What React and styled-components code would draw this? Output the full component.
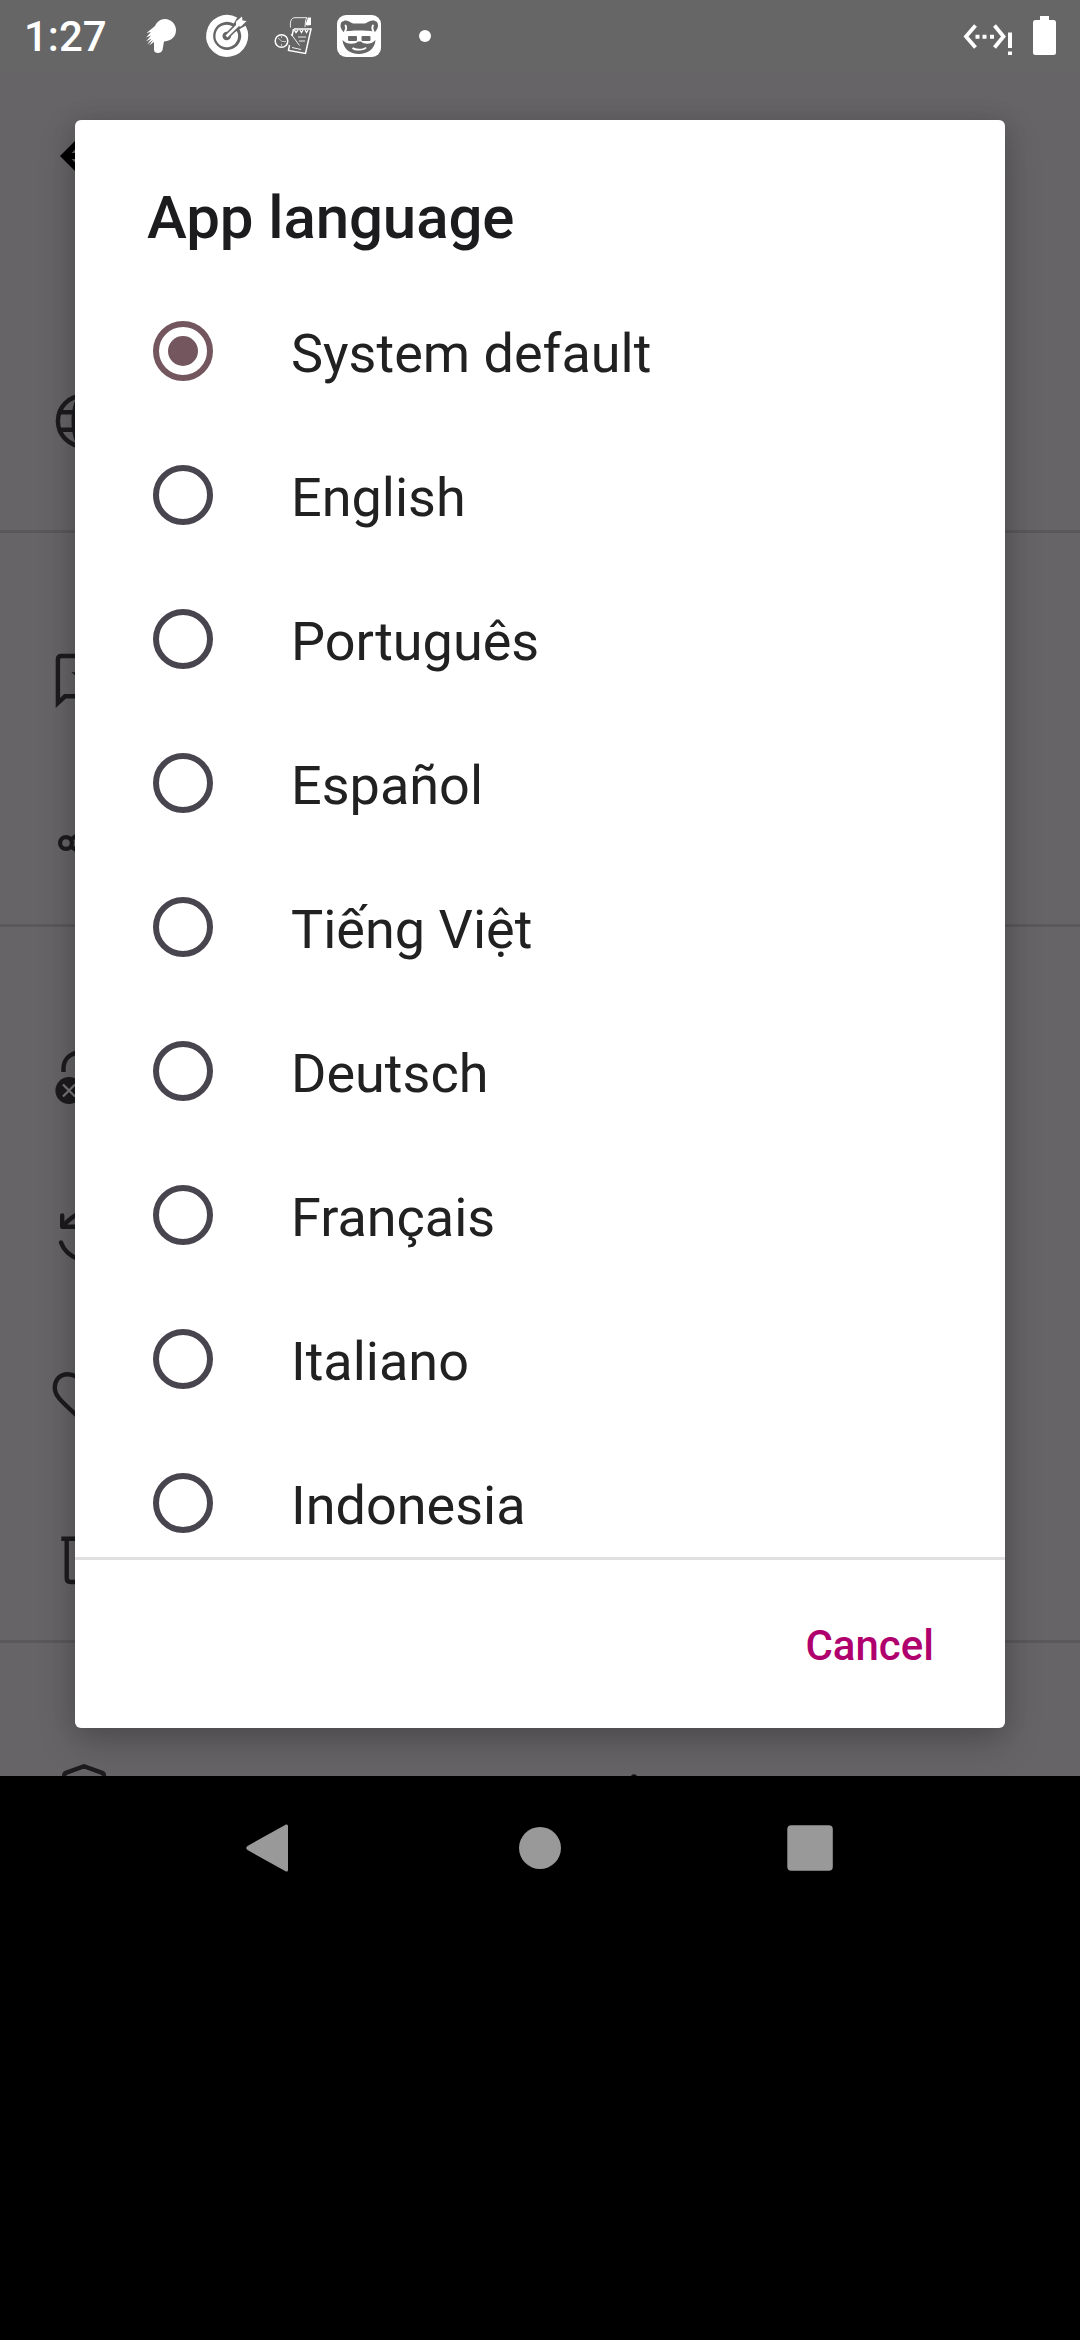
import React, { useState } from "react";
import styled, { createGlobalStyle } from "styled-components";

const GlobalStyle = createGlobalStyle`
  body { margin: 0; background: #000; }
  * { box-sizing: border-box; }
`;

const Screen = styled.div`
  position: relative;
  display: flex;
  flex-direction: column;
  width: 1080px;
  height: 2340px;
  overflow: hidden;
  background: #000;
  font-family: Roboto, "Noto Sans", sans-serif;
`;

const StatusBar = styled.header`
  display: flex;
  align-items: center;
  height: 72px;
  padding-left: 24px;
  background: #666666;
  color: #fff;
`;

const Clock = styled.time`
  width: 104px;
  padding-top: 2px;
  font-size: 42px;
  font-weight: 500;
  line-height: 50px;
  white-space: nowrap;
`;

const StatusIcons = styled.div`
  display: flex;
  margin-left: ${(p) => (p.$end ? "auto" : "0")};
`;

const Glyph = styled.svg`
  display: block;
  flex: none;
  width: ${(p) => p.$w}px;
  height: ${(p) => p.$h}px;
`;

const Page = styled.main`
  display: flex;
  flex-direction: column;
  height: 1704px;
  overflow: hidden;
  background: #676468;
  color: #1d1b1e;
`;

const AppBar = styled.div`
  height: 168px;
  color: #000;
`;

const Section = styled.section`
  display: flex;
  flex: none;
  flex-direction: column;
  justify-content: flex-end;
  height: ${(p) => p.$h}px;
  padding-bottom: ${(p) => p.$pad || 0}px;
  border-bottom: ${(p) => (p.$last ? "none" : "3px solid #5b585c")};
`;

const SettingRow = styled.div`
  display: flex;
  height: ${(p) => p.$h || 162}px;
`;

const Dialog = styled.div`
  position: absolute;
  top: 120px;
  left: 75px;
  display: flex;
  flex-direction: column;
  width: 930px;
  height: 1608px;
  overflow: hidden;
  border-radius: 6px;
  background: #fff;
`;

/* Clips the dialog shadow so that it stays above the navigation bar. */
const ShadowLayer = styled.div`
  position: absolute;
  inset: 0 0 564px 0;
  overflow: hidden;
  &::before {
    content: "";
    position: absolute;
    top: 120px;
    left: 75px;
    width: 930px;
    height: 1608px;
    border-radius: 6px;
    box-shadow: 0 14px 36px rgba(0, 0, 0, 0.22), 0 0 24px rgba(0, 0, 0, 0.1);
  }
`;

const Title = styled.h1`
  flex: none;
  height: 159px;
  margin: 0;
  padding: 62px 72px 0;
  color: #1c1b1e;
  font-size: 60px;
  font-weight: 500;
  line-height: 72px;
  letter-spacing: -0.1px;
`;

const Options = styled.div`
  flex: 1;
  min-height: 0;
  overflow: hidden;
`;

const Option = styled.label`
  display: flex;
  align-items: center;
  gap: 75px;
  height: 144px;
  padding-left: 78px;
`;

const Radio = styled.span`
  display: flex;
  flex: none;
  align-items: center;
  justify-content: center;
  width: 60px;
  height: 60px;
  border: 6px solid ${(p) => (p.$on ? "#74565f" : "#49454e")};
  border-radius: 50%;
  &::after {
    content: "";
    width: 30px;
    height: 30px;
    border-radius: 50%;
    background: ${(p) => (p.$on ? "#74565f" : "transparent")};
  }
`;

const OptionText = styled.span`
  padding: 5px 0 0 3px;
  color: #212121;
  font-size: 54px;
  line-height: 64px;
  white-space: nowrap;
`;

const Actions = styled.footer`
  display: flex;
  flex: none;
  align-items: center;
  justify-content: flex-end;
  height: 171px;
  padding-right: 35px;
  border-top: 3px solid #e0e0e0;
`;

const TextButton = styled.button`
  padding: 4px 36px 0;
  border: 0;
  background: none;
  color: #b0006d;
  font-family: inherit;
  font-size: 42px;
  font-weight: 500;
  line-height: 50px;
`;

const NavBar = styled.nav`
  display: flex;
  justify-content: center;
  height: 144px;
  gap: 198px;
  color: #999;
`;

const Icon = ({ x = 0, y, w = 110, h = 162, children }) => (
  <Glyph $w={w} $h={h} viewBox={`${x} ${y} ${w} ${h}`} fill="none" stroke="currentColor" strokeWidth="4.4">
    {children}
  </Glyph>
);

const languages = [
  "System default",
  "English",
  "Português",
  "Español",
  "Tiếng Việt",
  "Deutsch",
  "Français",
  "Italiano",
  "Indonesia",
];

function StatusGlyphs() {
  return (
    <StatusIcons>
      <Icon x={128} y={0} w={66} h={72}>
        <path
          d="M165 19C171 19 176 24 176 30C176 36 172 41 164 41.500L162.500 50C161.500 54 154 54 154 50V42L149 45.500L153 40L147 44.500L151.500 38.500L146 41.500L151 35.500L146 37.500L151 32L146.500 33L155 26C157 22 160 19 165 19Z"
          fill="currentColor" stroke="none"
        />
      </Icon>
      <Icon x={194} y={0} w={66} h={72}>
        <path d="M235.500 20.500A17.500 17.500 0 1 0 242.500 27.500" strokeWidth="7" />
        <path d="M231 29.500A7.800 7.800 0 1 0 233.700 32.500" strokeWidth="7" />
        <path d="M226.500 36.500L238 25" stroke="#666" strokeWidth="6" />
        <path d="M226.500 36.500L240 23" strokeWidth="2.600" />
        <path d="M236 26V21.500L242 16.500L242.500 20.500L246.500 21L241 26.500Z" fill="currentColor" stroke="none" />
      </Icon>
      <Icon x={260} y={0} w={66} h={72}>
        <g strokeWidth="0.900">
          <circle cx="281.500" cy="41" r="6.300" strokeWidth="1.500" />
          <path d="M278 38L282 41.500H286M281.500 36V38M281.500 44V46" strokeWidth="0.600" />
          <path d="M290.500 27.500C290 21 291 18 295 17.700H307C305 20 305.500 24 305 27" />
          <path d="M294 29L311 29L305.500 53.500L288.500 50.500L289.500 45M292 36L293.500 29" strokeWidth="1.500" />
          <path d="M294.500 30L296 32.500L298 30M300 30L301.500 32.500L303 30M305 30L306.500 32.500L308 30" strokeWidth="1.300" />
          <path d="M298 37H306M299 41H305M292 47.500L301 49.500M291 34L299.500 45.500" />
          <path d="M308 17.500H311V25L307 25.500L305.500 24.500Z" fill="currentColor" stroke="none" />
        </g>
      </Icon>
      <Icon x={326} y={0} w={66} h={72}>
        <rect x="337" y="15" width="44" height="42" rx="9" fill="currentColor" stroke="none" />
        <g fill="#666" stroke="none">
          <path d="M341.500 22C344 20.500 346 20 348 21L353 23.500H365L370 21C373 20 375 20.500 377 22C379 25 378 29 375 32C369 30 349 30 343.500 32C340 28 340 25 341.500 22Z" />
          <path d="M342.500 40C347 45 355 44.500 358 41.500H361C364 44.500 371 45 375.500 40C375 49 367 54 359 54C350 54 343.500 49 342.500 40Z" />
          <rect x="348" y="36" width="9" height="5" rx="1" />
          <rect x="361.500" y="36" width="9" height="5" rx="1" />
        </g>
        <path d="M345 25C347.500 27 346 30 344.500 33M373.500 25C371 27 372.500 30 374 33" strokeWidth="2" />
        <path d="M352.500 48C355 50.300 364 50.300 366 47.500" strokeWidth="1.700" />
      </Icon>
      <Icon x={392} y={0} w={66} h={72}>
        <circle cx="425" cy="36" r="6" fill="currentColor" stroke="none" />
      </Icon>
    </StatusIcons>
  );
}

function SystemGlyphs() {
  return (
    <StatusIcons $end>
      <Icon x={956} y={0} w={64} h={72}>
        <path d="M975.500 25.500L966 36.500L975.500 47.500M994.500 25.500L1003.500 36.500L994.500 47.500" strokeWidth="3.800" />
        <path d="M975.500 36.700H979.500M982.500 36.700H986.500M990 36.700H994" strokeWidth="4" />
        <path d="M1010 32.500V48M1010 51.500V55" strokeWidth="4" />
      </Icon>
      <Icon x={1020} y={0} w={60} h={72}>
        <path d="M1040 16H1049V20H1053.500Q1056 20 1056 22.500V52.500Q1056 55 1053.500 55H1035.500Q1033 55 1033 52.500V22.500Q1033 20 1035.500 20H1040Z" fill="currentColor" stroke="none" />
      </Icon>
    </StatusIcons>
  );
}

export default function App() {
  const [selected, setSelected] = useState(0);
  return (
    <>
      <GlobalStyle />
      <Screen>
        <StatusBar>
          <Clock>1:27</Clock>
          <StatusGlyphs />
          <SystemGlyphs />
        </StatusBar>

        <Page>
          <AppBar>
            <Icon y={72} h={168}>
              <path transform="translate(48 120) scale(3)" d="M20 11H7.830l5.590-5.590L12 4l-8 8 8 8 1.410-1.410L7.830 13H20v-2z" fill="currentColor" stroke="none" />
            </Icon>
          </AppBar>

          <Section $h={293} $pad={28}>
            <SettingRow>
              <Icon y={340}>
                <circle cx="83.200" cy="421" r="25.300" />
                <ellipse cx="83.200" cy="421" rx="9.500" ry="25.300" />
                <path d="M60 412.200H106M60 429.800H106" />
              </Icon>
            </SettingRow>
          </Section>

          <Section $h={394}>
            <SettingRow>
              <Icon y={600}>
                <path d="M57.900 703V659.500Q57.900 656 61.500 656H105Q108.500 656 108.500 659.500V692.800Q108.500 696.300 105 696.300H65Z" />
                <path d="M71.300 672.300H80.500L83.200 664L86 672.300H95L87.800 678L90.500 687L83.200 681.500L75.800 687L78.500 678Z" fill="currentColor" stroke="none" />
              </Icon>
            </SettingRow>
            <SettingRow>
              <Icon y={762}>
                <circle cx="66" cy="843" r="5.900" strokeWidth="4.200" />
                <path d="M70 840L98 822M70 846L98 864" />
              </Icon>
            </SettingRow>
          </Section>

          <Section $h={716}>
            <SettingRow>
              <Icon y={992}>
                <path d="M63.500 1072V1068.500C63.500 1060 69 1054 78 1052.500" />
                <circle cx="69" cy="1090.500" r="13.600" fill="currentColor" stroke="none" />
                <path d="M63 1084.500L75 1096.500M75 1084.500L63 1096.500" stroke="#7a777b" strokeWidth="2.200" />
              </Icon>
            </SettingRow>
            <SettingRow>
              <Icon y={1154}>
                <g strokeLinecap="round" strokeLinejoin="round">
                  <path d="M62.200 1215.500V1226.700H78" />
                  <path d="M63.500 1225.500C67.500 1221 72 1217 78 1214" />
                  <path d="M61 1242.500C63.500 1249.500 68 1255 78 1259" />
                </g>
              </Icon>
            </SettingRow>
            <SettingRow>
              <Icon y={1316}>
                <path d="M84 1384C79 1377 73.500 1374.200 67.500 1374.200C60 1374.200 54.800 1380 54.800 1388C54.800 1396.500 62 1402 84 1422" />
              </Icon>
            </SettingRow>
            <SettingRow>
              <Icon y={1478}>
                <path d="M61.300 1538.700H107M66.700 1538V1578Q66.700 1582 70.700 1582H96" />
              </Icon>
            </SettingRow>
          </Section>

          <Section $h={133} $last>
            <SettingRow $h={66}>
              <Icon y={1710} h={66} w={640}>
                <path d="M64.200 1790V1775.500Q64.200 1773.500 66.500 1772.600L84 1766.300L101.500 1772.600Q104 1773.500 104 1775.500V1790" strokeLinejoin="round" />
                <path d="M631 1776Q631.500 1774.300 634 1774.300Q636.500 1774.300 637 1776Z" fill="#111" stroke="none" />
              </Icon>
            </SettingRow>
          </Section>
        </Page>

        <NavBar>
          <Icon x={234} y={1776} w={72} h={144}>
            <path d="M286 1824.500Q288 1824 288 1826V1870Q288 1872 286 1871.500L247.500 1850Q245 1848 247.500 1846Z" fill="currentColor" stroke="none" />
          </Icon>
          <Icon x={504} y={1776} w={72} h={144}>
            <circle cx="540" cy="1848" r="21" fill="currentColor" stroke="none" />
          </Icon>
          <Icon x={774} y={1776} w={72} h={144}>
            <rect x="787.300" y="1825.300" width="45.500" height="45.500" rx="4" fill="currentColor" stroke="none" />
          </Icon>
        </NavBar>

        <ShadowLayer />
        <Dialog role="dialog" aria-label="App language">
          <Title>App language</Title>
          <Options role="radiogroup">
            {languages.map((name, i) => (
              <Option key={name} role="radio" aria-checked={i === selected} onClick={() => setSelected(i)}>
                <Radio $on={i === selected} />
                <OptionText>{name}</OptionText>
              </Option>
            ))}
          </Options>
          <Actions>
            <TextButton>Cancel</TextButton>
          </Actions>
        </Dialog>
      </Screen>
    </>
  );
}
